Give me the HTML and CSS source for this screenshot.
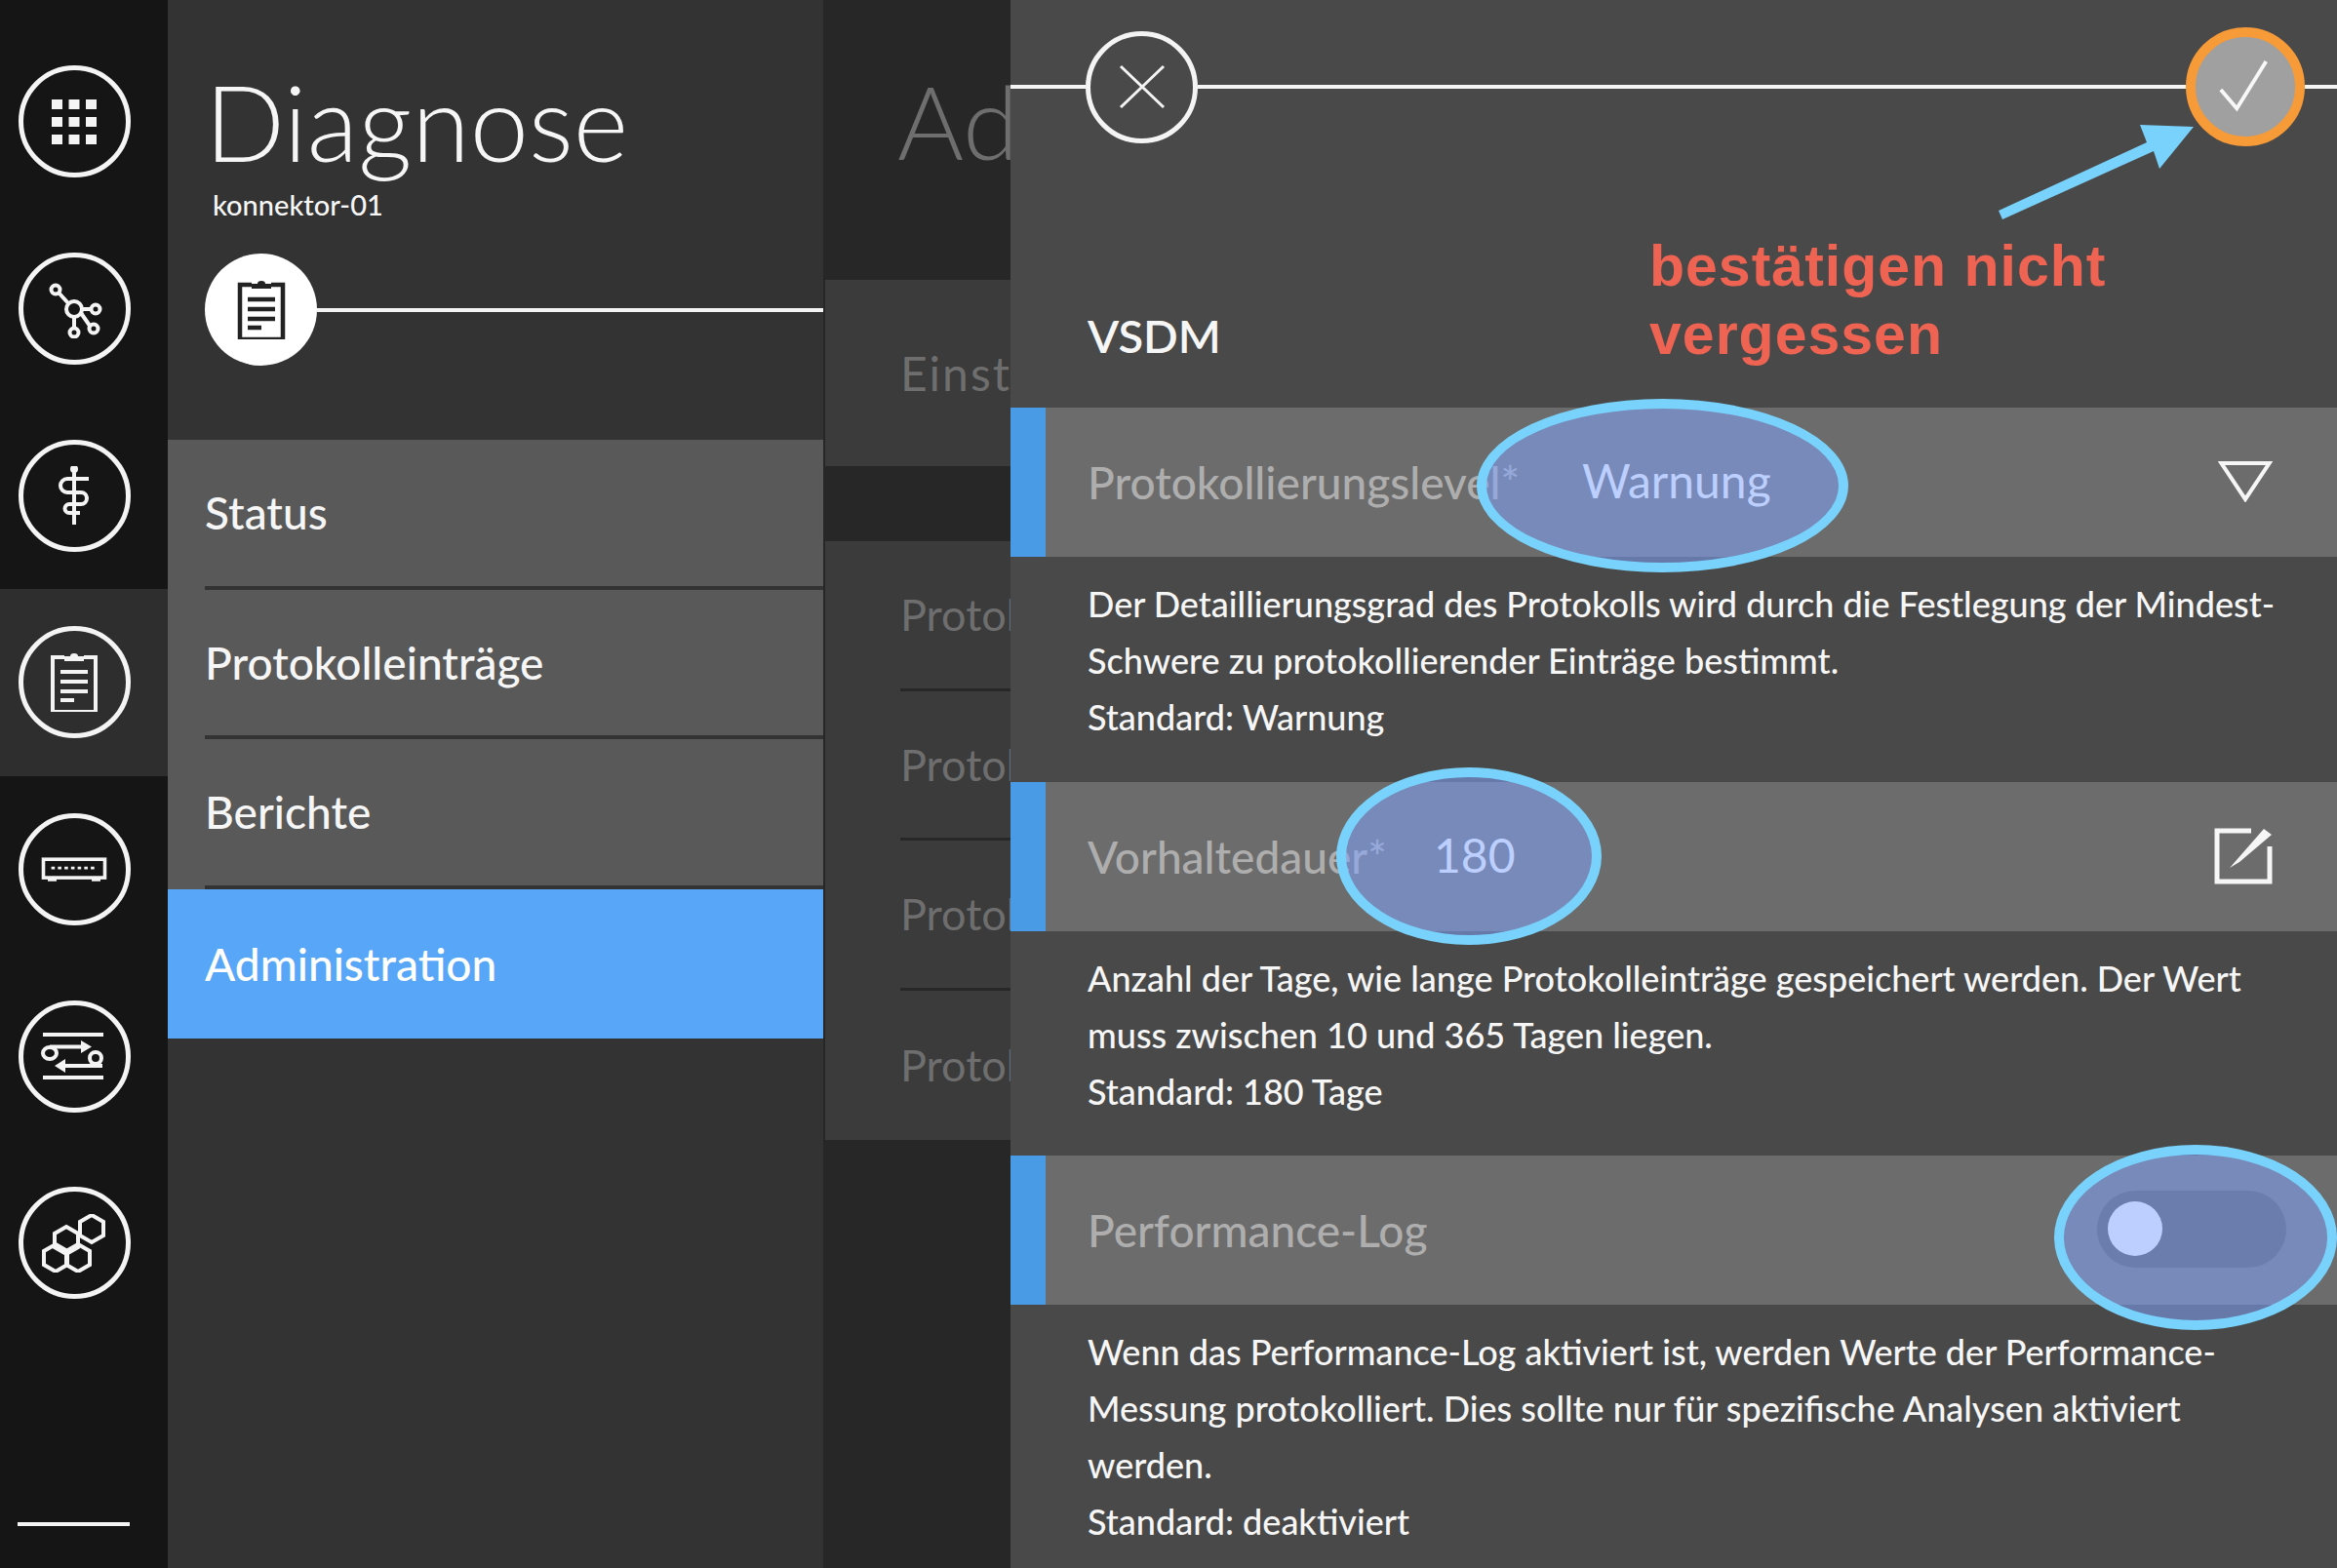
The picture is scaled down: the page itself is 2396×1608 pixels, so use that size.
FILE: index.html
```html
<!DOCTYPE html>
<html lang="de">
<head>
    <meta charset="UTF-8">
    <meta name="viewport" content="width=device-width, initial-scale=1.0">
    <title>Diagnose</title>
    <link rel="stylesheet" href="styles.css">
</head>
<body>

    <nav class="rail">
        <div class="rail-item"><span class="ring">
            <svg viewBox="0 0 60 60" class="icon"><g class="fill"><rect x="7" y="7" width="11" height="10"/><rect x="24.500" y="7" width="11" height="10"/><rect x="42" y="7" width="11" height="10"/><rect x="7" y="25" width="11" height="10"/><rect x="24.500" y="25" width="11" height="10"/><rect x="42" y="25" width="11" height="10"/><rect x="7" y="43" width="11" height="10"/><rect x="24.500" y="43" width="11" height="10"/><rect x="42" y="43" width="11" height="10"/></g></svg>
        </span></div>
        <div class="rail-item"><span class="ring">
            <svg viewBox="0 0 60 60" class="icon"><g class="line"><circle cx="30" cy="30" r="8"/><circle cx="11" cy="10" r="4.500"/><circle cx="52" cy="30" r="4.500"/><circle cx="50" cy="50" r="4.500"/><circle cx="30" cy="54" r="4.500"/><path d="M14 13 24 24M38 30H47.500M37 34 46 47M30 38V49.500"/></g></svg>
        </span></div>
        <div class="rail-item"><span class="ring">
            <svg viewBox="0 0 60 60" class="icon"><g class="line"><path d="M30 2V64"/><path d="M45 13H23a6.500 6.500 0 0 0 0 14H37a6 6 0 0 1 0 12H25a4.500 4.500 0 0 0 0 9H36"/></g><circle class="fill" cx="30" cy="3" r="4"/></svg>
        </span></div>
        <div class="rail-item rail-item-active"><span class="ring">
            <svg viewBox="0 0 60 60" class="icon"><g class="line"><path d="M20 4H8V60H52V4H40"/><path d="M16 19H44M16 29H44M16 39H44M16 48H30"/></g><path class="fill" d="M20 8V3H26a4 3 0 0 1 8 0H40V8Z"/></svg>
        </span></div>
        <div class="rail-item"><span class="ring">
            <svg viewBox="0 0 80 40" class="icon icon-wide"><g class="line"><rect x="5" y="8" width="70" height="21"/></g><path class="dots" d="M14 18H66"/><path class="fill" d="M10 30H20V33H10ZM60 30H70V33H60Z"/></svg>
        </span></div>
        <div class="rail-item"><span class="ring">
            <svg viewBox="0 0 70 60" class="icon icon-wide"><g class="line"><path d="M3 8H65M3 52H65"/><ellipse cx="10" cy="27" rx="7" ry="6"/><ellipse cx="57" cy="32" rx="6" ry="6"/><path d="M10 20.500H44M64 40H24"/></g><path class="fill" d="M42 14 53 20.500 42 27ZM26 33 15 40 26 47Z"/></svg>
        </span></div>
        <div class="rail-item"><span class="ring">
            <svg viewBox="0 0 70 60" class="icon icon-wide"><g class="line"><path d="M53 1 65 8V22L53 29 41 22V8Z"/><path d="M27 13 39 20V34L27 41 15 34V20Z"/><path d="M16 31 28 38V52L16 59 4 52V38Z"/><path d="M39 31 51 38V52L39 59 27 52V38Z"/></g></svg>
        </span></div>
        <div class="rail-foot"></div>
    </nav>

    <section class="menu">
        <h1 class="menu-title">Diagnose</h1>
        <div class="menu-sub">konnektor-01</div>
        <div class="menu-badge">
            <span class="badge">
                <svg viewBox="0 0 60 60" class="icon icon-dark"><g class="line"><path d="M20 4H8V60H52V4H40"/><path d="M16 19H44M16 29H44M16 39H44M16 48H30"/></g><path class="fill" d="M20 8V3H26a4 3 0 0 1 8 0H40V8Z"/></svg>
            </span>
            <span class="rule"></span>
        </div>
        <ul class="menu-list">
            <li class="menu-item"><span>Status</span></li>
            <li class="menu-item"><span>Protokolleinträge</span></li>
            <li class="menu-item"><span>Berichte</span></li>
            <li class="menu-item menu-item-active"><span>Administration</span></li>
        </ul>
    </section>

    <section class="admin">
        <h2 class="admin-title">Administration</h2>
        <div class="admin-card admin-card-top"><span>Einstellungen</span></div>
        <div class="admin-card">
            <div class="admin-row"><span>Protokollierung</span></div>
            <div class="admin-row"><span>Protokolleinträge</span></div>
            <div class="admin-row"><span>Protokollexport</span></div>
            <div class="admin-row admin-row-last"><span>Protokolle</span></div>
        </div>
    </section>

    <main class="panel">
        <div class="panel-head">
            <span class="rule rule-start"></span>
            <span class="ring ring-close">
                <svg viewBox="0 0 50 50" class="icon-x"><path d="M3 4 47 46M47 4 3 46"/></svg>
            </span>
            <span class="rule"></span>
            <span class="confirm">
                <svg viewBox="0 0 60 60" class="icon-check"><path d="M4 33 21 53 52 3"/></svg>
            </span>
            <span class="rule rule-end"></span>
        </div>

        <h3 class="panel-title">VSDM</h3>

        <div class="row">
            <span class="row-bar"></span>
            <span class="row-label label-level">Protokollierungslevel*</span>
            <span class="row-value">Warnung</span>
            <svg viewBox="0 0 54 42" class="row-action row-action-drop"><path d="M3 3H51L27 39Z"/></svg>
            <span class="mark mark-level"></span>
        </div>
        <p class="desc">Der Detaillierungsgrad des Protokolls wird durch die Festlegung der Mindest-<br>Schwere zu protokollierender Einträge bestimmt.<br>Standard: Warnung</p>

        <div class="row">
            <span class="row-bar"></span>
            <span class="row-label label-keep">Vorhaltedauer*</span>
            <span class="row-value">180</span>
            <svg viewBox="0 0 60 58" class="row-action row-action-edit"><path class="edit-box" d="M38 3H3V55H57V19"/><path class="edit-pen" d="M16 41 51 1 59 7 26 35Z"/></svg>
            <span class="mark mark-keep"></span>
        </div>
        <p class="desc">Anzahl der Tage, wie lange Protokolleinträge gespeichert werden. Der Wert<br>muss zwischen 10 und 365 Tagen liegen.<br>Standard: 180 Tage</p>

        <div class="row">
            <span class="row-bar"></span>
            <span class="row-label">Performance-Log</span>
            <span class="toggle"><span class="toggle-knob"></span></span>
            <span class="mark mark-toggle"></span>
        </div>
        <p class="desc">Wenn das Performance-Log aktiviert ist, werden Werte der Performance-<br>Messung protokolliert. Dies sollte nur für spezifische Analysen aktiviert<br>werden.<br>Standard: deaktiviert</p>

        <svg viewBox="0 0 210 105" class="note-arrow"><polygon points="4,91 156,21 149,3 204,5 169,48 163,30 8,100"/></svg>
        <div class="note">bestätigen nicht<br>vergessen</div>
    </main>

</body>
</html>
```

FILE: styles.css
```css
* {
    box-sizing: border-box;
}

body {
    margin: 0;
    height: 1608px;
    overflow: hidden;
    display: flex;
    font-family: Lato, "Noto Sans", sans-serif;
    color: #f6f6f6;
    background: #333;
}

h1, h2, h3, p, ul {
    margin: 0;
    padding: 0;
    font-weight: normal;
}

ul {
    list-style: none;
}

/* shared icon bits */
.ring {
    width: 115px;
    height: 115px;
    flex: none;
    border: 5px solid #f4f4f4;
    border-radius: 50%;
    display: flex;
    align-items: center;
    justify-content: center;
}

.icon {
    width: 60px;
    height: 60px;
}

.icon-wide {
    width: 72px;
}

.line {
    fill: none;
    stroke: #f4f4f4;
    stroke-width: 4;
}

.fill {
    fill: #f4f4f4;
}

.dots {
    fill: none;
    stroke: #f4f4f4;
    stroke-width: 3;
    stroke-dasharray: 4 3.500;
}

.icon-dark .line {
    stroke: #222;
    stroke-width: 4.500;
}

.icon-dark .fill {
    fill: #222;
}

.rule {
    flex: 1;
    height: 4px;
    background: #f4f4f4;
}

/* left rail */
.rail {
    width: 172px;
    flex: none;
    background: #151515;
    padding-top: 29px;
    display: flex;
    flex-direction: column;
}

.rail-item {
    height: 191.700px;
    padding-right: 20px;
    display: flex;
    align-items: center;
    justify-content: center;
}

.rail-item-active {
    background: #2e2e2e;
}

.rail-foot {
    height: 4px;
    width: 115px;
    margin: 190px 0 0 18px;
    background: #f4f4f4;
}

/* diagnose column */
.menu {
    width: 672px;
    flex: none;
    background: #333;
}

.menu-title {
    font-size: 108px;
    font-weight: 300;
    line-height: 130px;
    padding: 59px 0 0 38px;
    white-space: nowrap;
}

.menu-sub {
    font-size: 29px;
    line-height: 36px;
    padding: 3px 0 0 46px;
    font-weight: 500;
}

.menu-badge {
    display: flex;
    align-items: center;
    padding-left: 38px;
    margin-top: 32px;
    height: 115px;
}

.badge {
    width: 115px;
    height: 115px;
    flex: none;
    border-radius: 50%;
    background: #fff;
    display: flex;
    align-items: center;
    justify-content: center;
}

.menu-list {
    margin-top: 76px;
}

.menu-item {
    height: 153.500px;
    background: #595959;
    font-size: 46px;
    font-weight: 500;
}

.menu-item span {
    display: flex;
    align-items: center;
    height: 100%;
    margin-left: 38px;
    border-bottom: 4px solid #333;
}

.menu-item-active {
    background: #58a6f8;
    color: #fff;
}

.menu-item-active span {
    border-bottom: none;
}

/* administration column, behind the panel */
.admin {
    width: 192px;
    flex: none;
    overflow: hidden;
    background: #272727;
    white-space: nowrap;
    color: #6e6e6e;
}

.admin-title {
    font-size: 104px;
    font-weight: 300;
    line-height: 130px;
    height: 287px;
    padding: 59px 0 0 76px;
}

.admin-card {
    margin-left: 2px;
    background: #3b3b3b;
    font-size: 45px;
}

.admin-card-top {
    height: 191px;
    margin-bottom: 77px;
    padding: 0 0 0 77px;
    font-size: 48px;
    letter-spacing: 2px;
    display: flex;
    align-items: center;
}

.admin-row {
    height: 153.500px;
    margin-left: 77px;
    display: flex;
    align-items: center;
    border-bottom: 3px solid #272727;
}

.admin-row-last {
    border-bottom: none;
}

/* slide-in panel */
.panel {
    flex: 1;
    position: relative;
    background: #494949;
    overflow: hidden;
}

.panel-head {
    height: 178px;
    display: flex;
    align-items: center;
}

.rule-start {
    flex: none;
    width: 77px;
}

.rule-end {
    flex: none;
    width: 33px;
}

.ring-close {
    background: #494949;
}

.icon-x {
    width: 50px;
    height: 50px;
    fill: none;
    stroke: #f4f4f4;
    stroke-width: 3;
}

.confirm {
    width: 122px;
    height: 122px;
    flex: none;
    border: 10px solid #f79a38;
    border-radius: 50%;
    background: #a0a0a0;
    display: flex;
    align-items: center;
    justify-content: center;
}

.icon-check {
    width: 58px;
    height: 58px;
    fill: none;
    stroke: #f8f8f8;
    stroke-width: 4;
}

.panel-title {
    height: 240px;
    padding: 137px 0 0 79px;
    font-size: 47px;
    font-weight: 600;
    line-height: 58px;
}

.row {
    position: relative;
    height: 153px;
    display: flex;
    align-items: center;
    background: #6c6c6c;
    font-size: 46px;
}

.row-bar {
    width: 36px;
    height: 100%;
    margin-right: 43px;
    flex: none;
    background: #4a9be6;
}

.row-label {
    color: #aeaeae;
    font-weight: 500;
}

.label-level {
    width: 507px;
}

.label-keep {
    width: 355px;
}

.row-value {
    color: #fff;
    font-size: 48px;
    padding-bottom: 4px;
}

.row-action {
    margin-left: auto;
    margin-right: 66px;
}

.row-action-drop {
    width: 56px;
    height: 43px;
    margin-right: 66px;
    margin-bottom: 3px;
    fill: none;
    stroke: #f6f6f6;
    stroke-width: 4;
}

.row-action-edit {
    width: 60px;
    height: 58px;
}

.edit-box {
    fill: none;
    stroke: #f6f6f6;
    stroke-width: 5;
}

.edit-pen {
    fill: #f6f6f6;
}

.toggle {
    width: 194px;
    height: 79px;
    margin-left: auto;
    margin-right: 52px;
    margin-bottom: 3px;
    padding-left: 11px;
    border-radius: 40px;
    background: #515151;
    display: flex;
    align-items: center;
}

.toggle-knob {
    width: 56px;
    height: 56px;
    border-radius: 50%;
    background: #fff;
}

.desc {
    padding: 19px 0 37.500px 79px;
    font-size: 36px;
    font-weight: 500;
    line-height: 58px;
}

/* hand-drawn review marks on top of the screenshot */
.mark {
    position: absolute;
    border: 10px solid #78d2fb;
    border-radius: 50%;
    background: rgba(129, 165, 255, 0.53);
}

.mark-level {
    left: 478px;
    top: -9px;
    width: 381px;
    height: 178px;
}

.mark-keep {
    left: 334px;
    top: -15px;
    width: 272px;
    height: 182px;
}

.mark-toggle {
    left: 1070px;
    top: -11px;
    width: 290px;
    height: 190px;
}

.note-arrow {
    position: absolute;
    left: 1009px;
    top: 125px;
    width: 210px;
    height: 105px;
    fill: #78d2fb;
}

.note {
    position: absolute;
    left: 655px;
    top: 238px;
    font-family: "Liberation Sans", Arial, sans-serif;
    font-size: 59px;
    font-weight: bold;
    line-height: 70px;
    letter-spacing: 1px;
    color: #ee6352;
    white-space: nowrap;
}
```
